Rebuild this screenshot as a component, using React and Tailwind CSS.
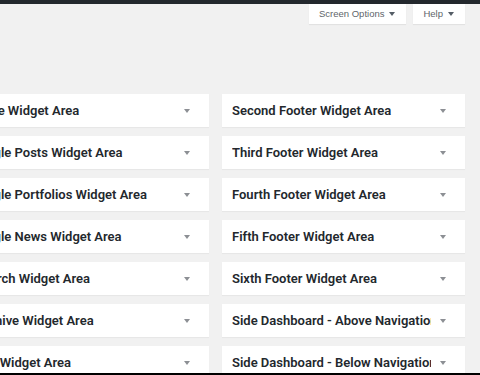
import React from "react";

const leftAreas = [
  "Page Widget Area",
  "Single Posts Widget Area",
  "Single Portfolios Widget Area",
  "Single News Widget Area",
  "Search Widget Area",
  "Archive Widget Area",
  "Tag Widget Area",
];

const rightAreas = [
  "Second Footer Widget Area",
  "Third Footer Widget Area",
  "Fourth Footer Widget Area",
  "Fifth Footer Widget Area",
  "Sixth Footer Widget Area",
  "Side Dashboard - Above Navigation",
  "Side Dashboard - Below Navigation",
];

function WidgetArea({ title }) {
  return (
    <div className="flex items-center h-[33px] mb-[9px] bg-white shadow-[0_1px_1px_rgba(0,0,0,0.04)] pl-[10px]">
      <div className="flex-1 min-w-0 overflow-hidden whitespace-nowrap text-[13px] font-semibold text-[#23282d] font-[Roboto,sans-serif]">
        {title}
      </div>
      <span className="ml-[9px] mr-[19px] w-0 h-0 border-x-[3px] border-t-[4px] border-x-transparent border-t-[#8c8f94]" />
    </div>
  );
}

function TabButton({ label }) {
  return (
    <button className="flex items-center h-[20px] pl-[10px] pr-[11px] bg-white shadow-[0_1px_1px_rgba(0,0,0,0.06)] text-[9.5px] text-[#60656a] font-['Liberation_Sans',sans-serif]">
      {label}
      <span className="ml-[5px] w-0 h-0 border-x-[3px] border-t-[4px] border-x-transparent border-t-[#555d66]" />
    </button>
  );
}

export default function App() {
  return (
    <div className="flex flex-col h-[375px] w-[480px] overflow-hidden bg-[#f1f1f1]">
      <div className="h-[4px] bg-[#23282d]" />
      <div className="flex justify-end gap-[7px] pr-[15px]">
        <TabButton label="Screen Options" />
        <TabButton label="Help" />
      </div>
      <div className="flex-1 overflow-hidden pt-[70px]">
        <div className="flex gap-[13px] -ml-[35px]">
          <div className="w-[244px] shrink-0">
            {leftAreas.map((t) => (
              <WidgetArea key={t} title={t} />
            ))}
          </div>
          <div className="w-[243px] shrink-0">
            {rightAreas.map((t) => (
              <WidgetArea key={t} title={t} />
            ))}
          </div>
        </div>
      </div>
      <div className="h-[2px] bg-black" />
    </div>
  );
}
